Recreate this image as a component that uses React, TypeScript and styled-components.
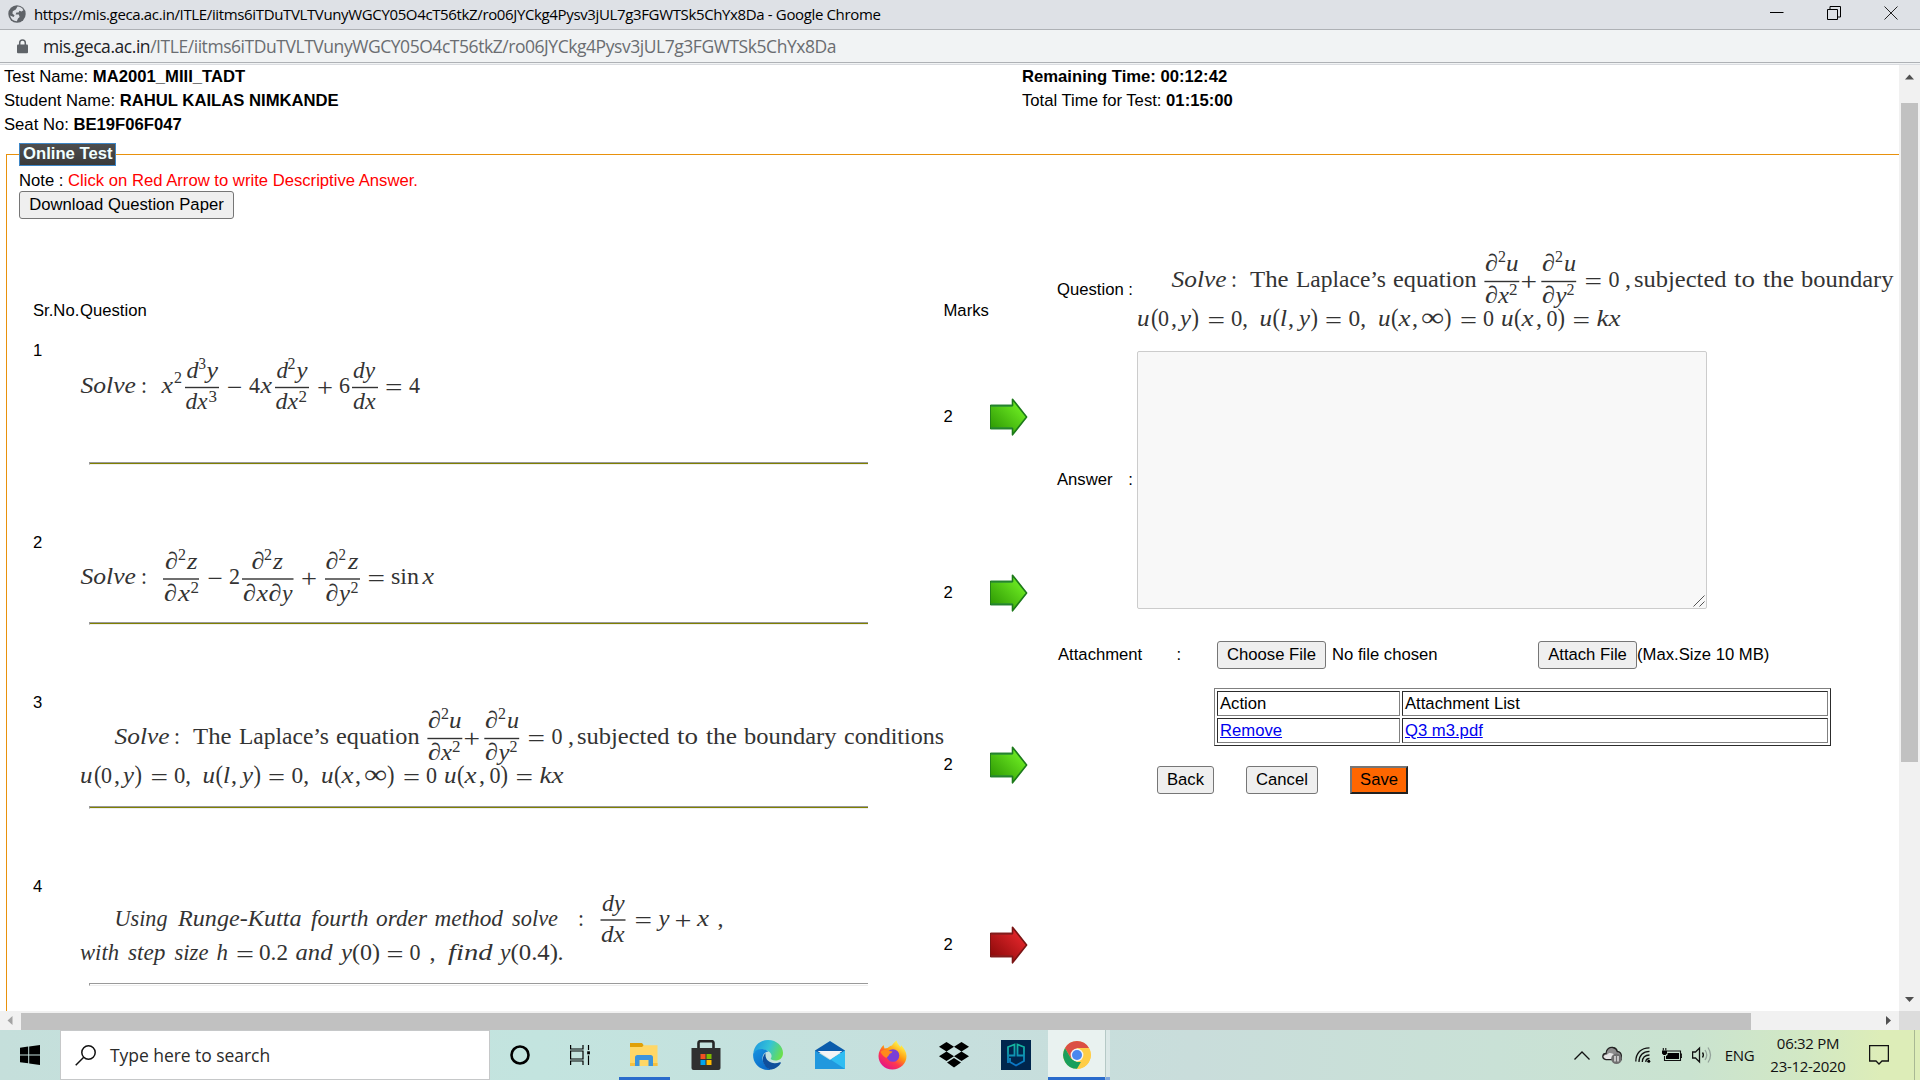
import React from 'react';
import styled, { createGlobalStyle } from 'styled-components';

const GlobalStyle = createGlobalStyle`
  * { box-sizing: border-box; }
  body { margin: 0; overflow: hidden; background: #fff; }
`;

const SANS = `"Liberation Sans", Arial, sans-serif`;
const UI = `"Open Sans", "Noto Sans", sans-serif`;

const Screen = styled.div`
  width: 1920px;
  height: 1080px;
  display: flex;
  flex-direction: column;
  overflow: hidden;
  background: #fff;
`;

/* ---------- browser chrome ---------- */

const TitleBar = styled.header`
  height: 30px;
  flex: none;
  display: flex;
  align-items: center;
  padding: 0 22px 2px 8px;
  background: #dee1e6;
  border-bottom: 1px solid #aeb1b5;
  font-family: ${UI};
`;

const TitleText = styled.span`
  margin-left: 8px;
  flex: 1;
  font-size: 15px;
  letter-spacing: -0.36px;
  color: #000;
  white-space: nowrap;
`;

const WindowButtons = styled.div`
  display: flex;
  align-items: center;
  gap: 43px;
  padding-bottom: 1px;
`;

const AddressBar = styled.div`
  height: 35px;
  flex: none;
  display: flex;
  align-items: center;
  padding: 0 16px 3px;
  background: linear-gradient(#f1f3f4 32px, #aeb1b5 32px, #aeb1b5 33px, #f1f3f4 33px, #f1f3f4 34px, #dadce0 34px);
  font-family: ${UI};
`;

const Url = styled.span`
  margin-left: 14px;
  font-size: 17.5px;
  letter-spacing: -0.45px;
  color: #6a6d71;
  white-space: nowrap;
  b { font-weight: 400; color: #202124; }
`;

const Viewport = styled.div`
  height: 946px;
  flex: none;
  display: flex;
`;

const Page = styled.main`
  width: 1899px;
  overflow: hidden;
  font-family: ${SANS};
  font-size: 16.67px;
  line-height: 24px;
  color: #000;
  white-space: nowrap;
`;

const VTrack = styled.div`
  width: 21px;
  display: flex;
  flex-direction: column;
  align-items: center;
  padding: 8px 0 7px;
  background: #f1f1f1;
`;

const VThumb = styled.div`
  width: 17px;
  height: 659px;
  flex: none;
  margin: 21px 0 auto;
  background: #c1c1c1;
`;

const HTrack = styled.div`
  height: 19px;
  flex: none;
  display: flex;
  align-items: center;
  background: #f1f1f1;
`;

const HThumb = styled.div`
  width: 1730px;
  height: 17px;
  margin: 2px auto 0 8px;
  background: #c1c1c1;
`;

const Corner = styled.div`
  width: 21px;
  height: 19px;
  margin-left: 6px;
  background: #dcdcdc;
`;

/* ---------- exam page ---------- */

const Info = styled.div`
  display: grid;
  grid-template-columns: 1018px 1fr;
  grid-auto-rows: 24px;
  margin: 0 0 0 4px;
`;

const Fieldset = styled.section`
  width: 2000px;
  height: 900px;
  margin: 17px 0 0 6px;
  padding-left: 12px;
  border: 1px solid #e8910c;
`;

const Legend = styled.div`
  width: 97px;
  height: 23px;
  margin-top: -12px;
  padding-left: 3px;
  border: 1px solid #3d86c6;
  background: linear-gradient(#4e4e4e, #3a3a3a);
  color: #f0ffff;
  font-weight: 700;
  line-height: 20px;
`;

const Note = styled.div`
  height: 22px;
  margin-top: 3px;
  span { color: #f00; }
`;

const Button = styled.button<{ $w: number }>`
  width: ${(p) => p.$w}px;
  height: 28px;
  flex: none;
  padding: 0 0 1px;
  border: 1px solid #767676;
  border-radius: 3px;
  background: #efefef;
  font: 16.67px ${SANS};
  color: #000;
`;

const SaveButton = styled(Button)`
  border: 2px solid;
  border-color: #767676 #212121 #212121 #767676;
  border-radius: 0;
  background: #ff6600;
`;

const Body = styled.div`
  display: flex;
`;

const Download = styled.div`
  width: 0;
`;

const Questions = styled.div`
  width: 1038px;
  padding: 108px 0 0 14px;
`;

const QuestionRow = styled.div<{ $h: number; $gap: number }>`
  display: grid;
  grid-template-columns: 47px 863.5px 46.5px 38px;
  height: ${(p) => p.$h}px;
  margin-bottom: ${(p) => p.$gap}px;
`;

const Middle = styled.div`
  align-self: center;
  display: flex;
`;

const Rule = styled.div<{ $c: string }>`
  width: 779px;
  height: 3px;
  margin-left: 9px;
  border-top: 1px solid #9a9a9a;
  border-left: 1px solid #9a9a9a;
  border-bottom: 1px solid #eee;
  background: ${(p) => p.$c};
`;

const Formula = styled.svg`
  display: block;
  overflow: visible;
  font-family: "Liberation Serif", "Times New Roman", serif;
  fill: #333;
`;

const AnswerForm = styled.form`
  padding-top: 38px;
`;

const Field = styled.div<{ $h: number }>`
  display: flex;
  align-items: center;
  height: ${(p) => p.$h}px;
`;

const Label = styled.label`
  width: 76px;
  margin-right: 4px;
  display: flex;
  justify-content: space-between;
`;

const AnswerBox = styled.div`
  position: relative;
  display: flex;
`;

const Answer = styled.textarea`
  width: 570px;
  height: 258px;
  border: 1px solid #ccc;
  border-radius: 2px;
  background: #f8f8f8;
  resize: none;
`;

const Grip = styled.svg`
  position: absolute;
  right: 2px;
  bottom: 2px;
`;

const Attach = styled.div`
  display: flex;
  align-items: center;
  height: 28px;
  margin: 32px 0 19px 1px;
`;

const AttachText = styled.span<{ $w?: number; $ml?: number }>`
  width: ${(p) => (p.$w ? p.$w + 'px' : 'auto')};
  margin-left: ${(p) => p.$ml || 0}px;
`;

const Attachments = styled.div`
  display: grid;
  grid-template-columns: 183px 426px;
  grid-auto-rows: 25px;
  gap: 2px;
  width: 617px;
  margin-left: 157px;
  padding: 2px;
  border: 1px solid;
  border-color: #808080 #2c2c2c #2c2c2c #808080;
`;

const Cell = styled.div`
  padding-left: 2px;
  border: 1px solid;
  border-color: #2c2c2c #808080 #808080 #2c2c2c;
  line-height: 23px;
`;

const Link = styled.a`
  color: #0000ee;
  text-decoration: underline;
`;

const Actions = styled.div`
  display: flex;
  gap: 32px;
  margin: 20px 0 0 100px;
`;

/* ---------- taskbar ---------- */

const Taskbar = styled.footer`
  height: 50px;
  flex: none;
  display: flex;
  background: linear-gradient(90deg, #c5dfdb 0, #c3e4df 28%, #c6dfdd 50%, #c9dddb 62%, #c9e1d6 78%, #cae3d0 88%, #d2e8c4 94%, #ddedb8 98%);
  font-family: ${UI};
`;

const Start = styled.div`
  width: 60px;
  padding: 15px 0 0 20px;
`;

const Search = styled.div`
  width: 430px;
  height: 50px;
  display: flex;
  align-items: center;
  padding-left: 14px;
  border: 1px solid #c6c8c9;
  background: #fff;
  font-size: 17.5px;
  letter-spacing: -0.05px;
  color: #2b2b2b;
  svg { margin-right: 14px; }
`;

const Apps = styled.div`
  display: flex;
  margin-left: -1px;
`;

const AppSlot = styled.div<{ $active?: boolean; $open?: boolean }>`
  width: ${(p) => (p.$active ? 57 : p.$open ? 51 : 62)}px;
  margin: 0 ${(p) => (p.$open ? 5.5 : 0)}px;
  margin-left: ${(p) => (p.$active ? 1 : p.$open ? 5.5 : 0)}px;
  display: flex;
  align-items: center;
  justify-content: center;
  padding-top: ${(p) => (p.$active || p.$open ? 3 : 0)}px;
  border-bottom: ${(p) => (p.$active || p.$open ? '3px solid #2a6bcc' : '0')};
  background: ${(p) => (p.$active ? '#e9f2f0' : 'transparent')};
`;

const Stacked = styled.div`
  width: 5px;
  border-left: 1px solid #b5c9c6;
  border-bottom: 3px solid #7ea6de;
  background: #dbe8e7;
`;

const Tray = styled.div`
  display: flex;
  align-items: center;
  margin-left: auto;
  font-size: 15px;
  letter-spacing: -0.3px;
  color: #111;
`;

const TrayItem = styled.div<{ $w: number; $ml: number }>`
  width: ${(p) => p.$w}px;
  margin-left: ${(p) => p.$ml}px;
  display: flex;
  justify-content: center;
  white-space: nowrap;
`;

const Clock = styled(TrayItem)`
  flex-direction: column;
  align-items: center;
  line-height: 23px;
  padding-bottom: 1px;
`;

const ShowDesktop = styled.div`
  width: 6px;
  height: 50px;
  margin-left: 25px;
  border-left: 1px solid #a9b894;
`;

/* ---------- formulas ---------- */

type Token = [text: string, x: number, x2: number, y: number, size?: number, roman?: boolean];

const S = 16.5;
const op = (t: string, x: number, x2: number, y: number): Token => [t, x - 1, x2 + 1, y, 26, true];

const Tokens = ({ list }: { list: Token[] }) => (
  <>
    {list.map(([t, x, x2, y, size = 24, roman], i) => (
      <text
        key={i}
        x={x}
        y={y}
        fontSize={size}
        fontStyle={roman ? 'normal' : 'italic'}
        textLength={x2 - x}
        lengthAdjust="spacingAndGlyphs"
      >
        {t}
      </text>
    ))}
  </>
);

const Bars = ({ y, list }: { y: number; list: [number, number][] }) => (
  <>
    {list.map(([a, b], i) => (
      <rect key={i} x={a} y={y - 0.7} width={b - a} height={1.4} />
    ))}
  </>
);

const f1: Token[] = [
  ['Solve', 80.5, 136, 392], [':', 141, 147, 392, 24, true], ['x', 161.5, 173, 392], ['2', 174, 182, 382, S, true],
  ['d', 186.5, 198.5, 377], ['3', 198.5, 206, 368, S, true], ['y', 206.5, 218, 377],
  ['dx', 185.5, 207.5, 408], ['3', 208.5, 217, 400.5, S, true],
  op('−', 228, 241.5, 395), ['4', 249, 260, 392, 24, true], ['x', 260.5, 272, 392],
  ['d', 276.5, 288, 377], ['2', 287.5, 295.5, 368, S, true], ['y', 296.5, 307.5, 377],
  ['dx', 275.5, 298, 408], ['2', 298.5, 307, 400.5, S, true],
  op('+', 318, 332, 395), ['6', 339, 350, 392, 24, true],
  ['dy', 353, 375, 377], ['dx', 353, 375.5, 408],
  op('=', 386, 401.5, 395), ['4', 409, 420, 392, 24, true],
];

const f2: Token[] = [
  ['Solve', 80.5, 136, 584], [':', 141, 147, 584, 24, true],
  ['∂', 165, 178, 568.7], ['2', 178, 186, 559.5, S, true], ['z', 187, 197.5, 568.7],
  ['∂', 164, 177, 600.7], ['x', 178, 190, 600.7], ['2', 190.5, 199, 593, S, true],
  op('−', 208.5, 222, 587), ['2', 229, 240, 584, 24, true],
  ['∂', 251.5, 264.5, 568.7], ['2', 264, 272, 559.5, S, true], ['z', 273, 283, 568.7],
  ['∂', 243, 256, 600.7], ['x', 256.5, 268, 600.7], ['∂', 268.5, 281.5, 600.7], ['y', 282, 292.5, 600.7],
  op('+', 302, 316, 587),
  ['∂', 325.5, 338.5, 568.7], ['2', 338.5, 346, 559.5, S, true], ['z', 348, 358.5, 568.7],
  ['∂', 325.5, 338.5, 600.7], ['y', 339, 350, 600.7], ['2', 350.5, 358.5, 593, S, true],
  op('=', 368.5, 384, 587), ['sin', 391, 419, 584, 24, true], ['x', 422.5, 434, 584],
];

const laplace: Token[] = [
  ['Solve', 114.5, 169.5, 744], [':', 174, 180, 744, 24, true],
  ['The', 193, 231.5, 744, 24, true], ['Laplace’s', 239, 329, 744, 24, true], ['equation', 336, 419.5, 744, 24, true],
  ['∂', 428, 441, 728.3], ['2', 441, 449, 719, S, true], ['u', 449, 461.5, 728.3],
  ['∂', 428, 441, 760], ['x', 441, 452, 760], ['2', 452, 460.5, 752, S, true],
  op('+', 464.5, 479, 747),
  ['∂', 485, 498, 728.3], ['2', 498, 506, 719, S, true], ['u', 507, 519, 728.3],
  ['∂', 485, 498, 760], ['y', 498.5, 509.5, 760], ['2', 509.5, 517.5, 752, S, true],
  op('=', 528.5, 544, 747), ['0', 551.5, 562.5, 744, 24, true], [',', 568, 574, 744, 24, true],
  ['subjected', 577, 669.5, 744, 24, true], ['to', 677, 698, 744, 24, true], ['the', 706, 737, 744, 24, true],
  ['boundary', 744, 836.5, 744, 24, true],
  ['u', 80, 92.5, 783], ['(', 94, 101.5, 783, 25, true], ['0', 101, 112, 783, 24, true], [',', 114, 120, 783, 24, true],
  ['y', 123, 134, 783], [')', 134.5, 142, 783, 25, true], op('=', 151.5, 167, 786), ['0,', 174, 191, 783, 24, true],
  ['u', 202.5, 215, 783], ['(', 215.5, 223, 783, 25, true], ['l', 223, 230, 783], [',', 231, 237, 783, 24, true],
  ['y', 242, 253, 783], [')', 253.5, 261, 783, 25, true], op('=', 269, 284, 786), ['0,', 291.5, 309, 783, 24, true],
  ['u', 321, 333.5, 783], ['(', 334, 341.5, 783, 25, true], ['x', 341.5, 353.5, 783], [',', 355, 361, 783, 24, true],
  ['∞', 364, 387, 783, 26, true], [')', 387, 394.5, 783, 25, true], op('=', 404, 419, 786), ['0', 426, 437, 783, 24, true],
  ['u', 444, 456.5, 783], ['(', 457, 464.5, 783, 25, true], ['x', 464.5, 476.5, 783], [',', 479, 485, 783, 24, true],
  ['0', 489.5, 500.5, 783, 24, true], [')', 500.5, 508, 783, 25, true], op('=', 516.5, 532, 786), ['kx', 539.5, 563.5, 783],
];

const f3: Token[] = [...laplace, ['conditions', 844, 944, 744, 24, true]];

const f4: Token[] = [
  ['Using', 114.5, 167.5, 924], ['Runge-Kutta', 178, 301.5, 924], ['fourth', 311, 368.5, 924],
  ['order', 376, 427, 924], ['method', 434.5, 503, 924], ['solve', 512, 558, 924], [':', 578, 584, 924, 24, true],
  ['dy', 602, 624.5, 909], ['dx', 601, 624.5, 940], op('=', 635.5, 651, 927), ['y', 658.5, 669.5, 924],
  op('+', 675.5, 690.5, 927), ['x', 697, 709, 924], [',', 717.5, 723.5, 924, 24, true],
  ['with', 80, 119, 958.5], ['step', 128, 165.5, 958.5], ['size', 174.5, 208.5, 958.5], ['h', 216.5, 228, 958.5],
  op('=', 237, 253, 961), ['0.2', 259, 288, 958.5, 24, true], ['and', 295.5, 332.5, 958.5], ['y', 341, 352, 958.5],
  ['(0)', 352, 380, 958.5, 24, true], op('=', 387.5, 402.5, 961), ['0', 409.5, 420.5, 958.5, 24, true],
  [',', 429.5, 435.5, 958.5, 24, true], ['find', 448, 492.5, 958.5], ['y', 500, 510.5, 958.5],
  ['(0.4)', 510.5, 558, 958.5, 24, true], ['.', 557.5, 563.5, 958.5, 24, true],
];

const laplaceBars: [number, number][] = [[427.4, 462.3], [484.3, 519.2]];

type Question = {
  n: number; h: number; gap: number; top: number; fh: number; list: Token[];
  barY: number; bars: [number, number][]; rule: string; color: 'green' | 'red';
};

const questions: Question[] = [
  { n: 1, h: 156, gap: 36, top: 338, fh: 123, list: f1, barY: 386.5, bars: [[185, 219], [275, 309], [352, 378]], rule: '#808000', color: 'green' },
  { n: 2, h: 124, gap: 36, top: 531, fh: 91, list: f2, barY: 579, bars: [[163, 199], [242, 293.5], [325, 360]], rule: '#808000', color: 'green' },
  { n: 3, h: 148, gap: 36, top: 691, fh: 115, list: f3, barY: 738.5, bars: laplaceBars, rule: '#808000', color: 'green' },
  { n: 4, h: 140, gap: 0, top: 873.5, fh: 108, list: f4, barY: 918.5, bars: [[600.5, 625.5]], rule: '#fff', color: 'red' },
];

/* ---------- icons ---------- */

const Arrow = ({ color }: { color: 'green' | 'red' }) => {
  const id = 'arrow-' + color;
  const [dark, light, edge, shade] =
    color === 'green' ? ['#2f9a04', '#6be821', '#1d7a1a', '#2a8a3c'] : ['#8c0a0a', '#e0252a', '#7a1414', '#8a2020'];
  return (
    <svg width="38" height="38" viewBox="0 0 38 38">
      <defs>
        <linearGradient id={id} x1="0" y1="1" x2="1" y2="0">
          <stop offset="0.1" stopColor={dark} />
          <stop offset="0.8" stopColor={light} />
        </linearGradient>
      </defs>
      <path d="M0 7.5H22.5V1.2L36.6 19L22.5 36.8V30.5H0Z" fill={`url(#${id})`} stroke={edge} strokeWidth="1.6" strokeLinejoin="round" />
      <path d="M1 7.7H22.5M1 30.3H22.5" stroke={shade} strokeWidth="2.4" opacity="0.6" />
    </svg>
  );
};

const CaretSvg = styled.svg`
  flex: none;
`;

const Caret = ({ dir, color = '#505050' }: { dir: 'up' | 'down' | 'right'; color?: string }) => {
  const d = { up: 'M0 6.5L4.5 1.5L9 6.5Z', down: 'M0 2L4.5 7L9 2Z', right: 'M2 0V9L7 4.5Z' }[dir];
  return (
    <CaretSvg width="9" height="9" viewBox="0 0 9 9">
      <path d={d} fill={color} />
    </CaretSvg>
  );
};

const Globe = () => (
  <svg width="18" height="18" viewBox="0 0 18 18">
    <circle cx="9" cy="9" r="8.7" fill="#5f6368" />
    <path d="M9.5 1.6Q13.6 1.8 15.4 5.2L13.6 6.4L11.4 5.8L10.6 7.6L8.4 7.4L7.6 9.4L10.8 9.6L11.6 12L10 13.4L8.8 16.2Q3.6 15.8 2 10.4L5.6 12L6.6 10.6L4.4 8.4L4.8 6.2L7.8 4.6Z" fill="#dee1e6" />
  </svg>
);

const Lock = () => (
  <svg width="13" height="15" viewBox="0 0 13 15">
    <rect x="1" y="5.5" width="11" height="8.7" rx="1" fill="#5f6368" />
    <path d="M3.7 6V3.8a2.8 2.8 0 0 1 5.6 0V6" fill="none" stroke="#5f6368" strokeWidth="1.5" />
  </svg>
);

const FolderIcon = () => (
  <svg width="28" height="24" viewBox="0 0 28 24">
    <path d="M0 0H12L13.5 2V5H0Z" fill="#e0a008" />
    <path d="M0 4H12L14 2.3H27.5V23H0Z" fill="#ffd766" />
    <path d="M5 23V14.5a2.5 2.5 0 0 1 2.5-2.5H20.5a2.5 2.5 0 0 1 2.5 2.5V23H18.5V17H9.5V23Z" fill="#3c94dc" />
    <path d="M0 20H5V23H0ZM23 20H27.5V23H23Z" fill="#f7c03f" />
  </svg>
);

const StoreIcon = () => (
  <svg width="30" height="30" viewBox="0 0 30 30">
    <path d="M7.5 9V3a1.8 1.8 0 0 1 1.8-1.8H20.7A1.8 1.8 0 0 1 22.5 3V9" fill="none" stroke="#262626" strokeWidth="2.6" />
    <path d="M.5 8H29.5V28a2 2 0 0 1-2 2H2.5a2 2 0 0 1-2-2Z" fill="#303030" />
    <path d="M9.5 14H14.5V19H9.5Z" fill="#f25022" />
    <path d="M15.5 14H20.5V19H15.5Z" fill="#7fba00" />
    <path d="M9.5 20H14.5V25H9.5Z" fill="#00a4ef" />
    <path d="M15.5 20H20.5V25H15.5Z" fill="#ffb900" />
  </svg>
);

const EdgeIcon = () => (
  <svg width="30" height="30" viewBox="0 0 30 30">
    <defs>
      <linearGradient id="edgeTop" x1="0" y1="0.3" x2="1" y2="0.6">
        <stop offset="0" stopColor="#1f9be0" />
        <stop offset="0.5" stopColor="#35c3d6" />
        <stop offset="1" stopColor="#6be04a" />
      </linearGradient>
      <linearGradient id="edgeLeft" x1="0" y1="0" x2="0.6" y2="1">
        <stop offset="0" stopColor="#1793e0" />
        <stop offset="1" stopColor="#0a6ac8" />
      </linearGradient>
    </defs>
    <path d="M.3 13C1.5 5 7.5 0 15 0C24 0 30 6.5 30 13C30 18 26.5 20.5 22.5 20.5C19 20.5 17.5 19.3 17.8 18.3C18.5 17.3 18.8 16.3 18.3 14.6C16.5 9.5 7 7 .3 13Z" fill="url(#edgeTop)" />
    <path d="M.2 13.5C3.5 8 11 8 15.5 11.5C10.5 12 8.5 17 10 21C11.5 25.5 15.5 29 18 29.7C8 31.5-1 24 .2 13.5Z" fill="url(#edgeLeft)" />
    <path d="M12.5 13C9.5 16 9 20.5 11 24C13 28 16.5 29.7 18.5 29.5C22.5 28.8 25.8 26.5 27.8 23.2C28 22.5 27.5 22 26.8 22.3C19 25 12.5 21 12.5 15Z" fill="#0f4f9c" />
  </svg>
);

const MailIcon = () => (
  <svg width="30" height="28" viewBox="0 0 30 28">
    <path d="M0 9.5L15 0L30 9.5V12H0Z" fill="#0b5cab" />
    <path d="M0 9.5V28H30V9.5L15 19Z" fill="#2198de" />
    <path d="M30 9.5V28L15.5 18.5Z" fill="#30bdf2" />
    <path d="M2.5 10H27.5L15.5 18.3Z" fill="#f4f4f6" />
  </svg>
);

const FirefoxIcon = () => (
  <svg width="29" height="30" viewBox="0 0 29 30">
    <defs>
      <linearGradient id="fox" x1="0.85" y1="0.05" x2="0.25" y2="0.95">
        <stop offset="0.1" stopColor="#fff04a" />
        <stop offset="0.45" stopColor="#ff980e" />
        <stop offset="0.7" stopColor="#ff3750" />
        <stop offset="1" stopColor="#e31587" />
      </linearGradient>
    </defs>
    <path d="M5.5 5L6.5 8.5L9.5 8C11 7 12 5.5 14 5.5C15 3.5 17 1.5 18.5 .5C19 3 20.5 4.5 22.5 7C23 6.5 23 5.5 23 5C26 8 28.5 12 28.5 16C28.5 24 22 29.5 14.5 29.5C6.5 29.5 .5 23.5 .5 16C.5 12 2.5 8 5.5 5Z" fill="url(#fox)" />
    <circle cx="15" cy="15.5" r="6.3" fill="#7a3fd8" />
    <path d="M2.5 12C5 9 9 10 11 11L14.5 11.5C14 13 12 13.5 11.5 14C11 16 8.5 17 8.5 18C6 17 4 15 2.5 12Z" fill="#ff8a1c" />
  </svg>
);

const DropboxIcon = () => (
  <svg width="30" height="26" viewBox="0 0 30 26">
    <path d="M7.500 0L15 4.700L7.500 9.400L0 4.700ZM22.500 0L30 4.700L22.500 9.400L15 4.700ZM7.500 9.600L15 14.300L7.500 19L0 14.300ZM22.500 9.600L30 14.300L22.500 19L15 14.300ZM15 16L22 20.600L15 25.400L8 20.600Z" fill="#000" />
  </svg>
);

const PgIcon = () => (
  <svg width="30" height="30" viewBox="0 0 30 30">
    <defs>
      <linearGradient id="pg" x1="0" y1="0" x2="0" y2="1">
        <stop offset="0" stopColor="#14b8a0" />
        <stop offset="1" stopColor="#0a72c8" />
      </linearGradient>
    </defs>
    <rect width="30" height="30" fill="#00264d" />
    <path d="M7 23V7L13.5 4.5V15.5H8M23 15.5H16.5V4.5L23 7V21L15 25.5L9 22V18" fill="none" stroke="url(#pg)" strokeWidth="1.8" />
  </svg>
);

const ChromeIcon = () => (
  <svg width="28" height="28" viewBox="0 0 28 28">
    <circle cx="14" cy="14" r="13.8" fill="#ffcd46" />
    <path d="M2 7.1A13.8 13.8 0 0 1 26 7.1H14L8 17.5Z" fill="#db4f43" />
    <path d="M2 7.1L8 17.45L14 20.9H20L14 27.8A13.8 13.8 0 0 1 2 7.1Z" fill="#1a9f5c" />
    <path d="M14 7.1H26A13.8 13.8 0 0 1 14 27.8L20 17.5Z" fill="#ffcd46" />
    <circle cx="14" cy="14" r="6.4" fill="#f4f4f4" />
    <circle cx="14" cy="14" r="5" fill="#4a88ee" />
  </svg>
);

const line = { fill: 'none', stroke: '#111', strokeWidth: 1.3 } as const;

export default function App() {
  return (
    <>
      <GlobalStyle />
      <Screen>
        <TitleBar>
          <Globe />
          <TitleText>https://mis.geca.ac.in/ITLE/iitms6iTDuTVLTVunyWGCY05O4cT56tkZ/ro06JYCkg4Pysv3jUL7g3FGWTSk5ChYx8Da - Google Chrome</TitleText>
          <WindowButtons>
            <svg width="14" height="14" viewBox="0 0 14 14"><path d="M0 6.5H13.5" stroke="#000" /></svg>
            <svg width="14" height="14" viewBox="0 0 14 14"><path d="M.5 3.5H10.5V13.5H.5ZM3 3.5V.5H13.5V11H10.5" fill="none" stroke="#000" /></svg>
            <svg width="14" height="14" viewBox="0 0 14 14"><path d="M.5.5L13.5 13.5M13.5.5L.5 13.5" stroke="#222" /></svg>
          </WindowButtons>
        </TitleBar>
        <AddressBar>
          <Lock />
          <Url><b>mis.geca.ac.in</b>/ITLE/iitms6iTDuTVLTVunyWGCY05O4cT56tkZ/ro06JYCkg4Pysv3jUL7g3FGWTSk5ChYx8Da</Url>
        </AddressBar>

        <Viewport>
          <Page>
            <Info>
              <div>Test Name: <b>MA2001_MIII_TADT</b></div>
              <b>Remaining Time: 00:12:42</b>
              <div>Student Name: <b>RAHUL KAILAS NIMKANDE</b></div>
              <div>Total Time for Test: <b>01:15:00</b></div>
              <div>Seat No: <b>BE19F06F047</b></div>
            </Info>
            <Fieldset>
              <Legend>Online Test</Legend>
              <Note>Note : <span>Click on Red Arrow to write Descriptive Answer.</span></Note>
              <Body>
                <Download><Button $w={215}>Download Question Paper</Button></Download>
                <Questions>
                  <QuestionRow $h={24} $gap={16}>
                    <span>Sr.No.</span>
                    <span>Question</span>
                    <span>Marks</span>
                  </QuestionRow>
                  {questions.map((q) => (
                    <QuestionRow key={q.n} $h={q.h} $gap={q.gap}>
                      <span>{q.n}</span>
                      <div>
                        <Formula width="863" height={q.fh} viewBox={`80 ${q.top} 863 ${q.fh}`}>
                          <Tokens list={q.list} />
                          <Bars y={q.barY} list={q.bars} />
                        </Formula>
                        <Rule $c={q.rule} />
                      </div>
                      <Middle>2</Middle>
                      <Middle><Arrow color={q.color} /></Middle>
                    </QuestionRow>
                  ))}
                </Questions>
                <AnswerForm>
                  <Field $h={122}>
                    <Label><span>Question</span><span>:</span></Label>
                    <Formula width="762" height="122" viewBox="80 686 762 122">
                      <Tokens list={laplace} />
                      <Bars y={738.5} list={laplaceBars} />
                    </Formula>
                  </Field>
                  <Field $h={258}>
                    <Label><span>Answer</span><span>:</span></Label>
                    <AnswerBox>
                      <Answer />
                      <Grip width="12" height="12" viewBox="0 0 12 12">
                        <path d="M.5 11.500L11.500 .5M6.500 11.500L11.500 6.500" stroke="#555" />
                      </Grip>
                    </AnswerBox>
                  </Field>
                  <Attach>
                    <AttachText $w={118.5}>Attachment</AttachText>
                    <AttachText $w={40.5}>:</AttachText>
                    <Button type="button" $w={109}>Choose File</Button>
                    <AttachText $w={206} $ml={6}>No file chosen</AttachText>
                    <Button type="button" $w={99}>Attach File</Button>
                    <AttachText>(Max.Size 10 MB)</AttachText>
                  </Attach>
                  <Attachments>
                    <Cell>Action</Cell>
                    <Cell>Attachment List</Cell>
                    <Cell><Link>Remove</Link></Cell>
                    <Cell><Link>Q3 m3.pdf</Link></Cell>
                  </Attachments>
                  <Actions>
                    <Button type="button" $w={57}>Back</Button>
                    <Button type="button" $w={72}>Cancel</Button>
                    <SaveButton type="button" $w={58}>Save</SaveButton>
                  </Actions>
                </AnswerForm>
              </Body>
            </Fieldset>
          </Page>
          <VTrack>
            <Caret dir="up" />
            <VThumb />
            <Caret dir="down" />
          </VTrack>
        </Viewport>
        <HTrack>
          <svg width="13" height="9" viewBox="0 0 13 9"><path d="M12.500 0V9L7.500 4.500Z" fill="#a3a3a3" /></svg>
          <HThumb />
          <Caret dir="right" />
          <Corner />
        </HTrack>

        <Taskbar>
          <Start>
            <svg width="20" height="20" viewBox="0 0 20 20"><path d="M0 2.800L8.200 1.600V9.400H0ZM9.200 1.400L20 0V9.400H9.200ZM0 10.400H8.200V18.300L0 17.200ZM9.200 10.400H20V20L9.200 18.500Z" /></svg>
          </Start>
          <Search>
            <svg width="21" height="21" viewBox="0 0 21 21"><circle cx="13.500" cy="7.500" r="6.700" {...line} strokeWidth="1.500" /><path d="M8.700 12.300L.7 20.300" {...line} strokeWidth="1.500" /></svg>
            Type here to search
          </Search>
          <Apps>
            <AppSlot><svg width="20" height="20" viewBox="0 0 20 20"><circle cx="10" cy="10" r="8.500" fill="none" stroke="#000" strokeWidth="2.600" /></svg></AppSlot>
            <AppSlot>
              <svg width="24" height="20" viewBox="0 0 24 20"><path d="M.6 0V4H13V0M.6 20V16H13V20M.6 6H13V14H.6ZM18.500 0V5M18.500 10.500V20" fill="none" stroke="#000" strokeWidth="1.200" /><rect x="17.200" y="6.300" width="2.700" height="3" /></svg>
            </AppSlot>
            <AppSlot $open><FolderIcon /></AppSlot>
            <AppSlot><StoreIcon /></AppSlot>
            <AppSlot><EdgeIcon /></AppSlot>
            <AppSlot><MailIcon /></AppSlot>
            <AppSlot><FirefoxIcon /></AppSlot>
            <AppSlot><DropboxIcon /></AppSlot>
            <AppSlot><PgIcon /></AppSlot>
            <AppSlot $active><ChromeIcon /></AppSlot>
            <Stacked />
          </Apps>
          <Tray>
            <TrayItem $w={16} $ml={0}><svg width="16" height="9" viewBox="0 0 16 9"><path d="M.5 8.500L8 1L15.500 8.500" {...line} /></svg></TrayItem>
            <TrayItem $w={20} $ml={12}>
              <svg width="20" height="18" viewBox="0 0 20 18">
                <path d="M4 13.500C-.5 13 0 7.500 4 7.500C4 3 8 .8 11 1.500C13.500 2 15 4 15.300 5.500C18 5.500 19.500 8 19.300 10V13.500Z" fill="#8d8d8d" stroke="#222" strokeWidth="1.300" />
                <path d="M1.500 11C2 9 4 8.500 5 8.700C7 6 10 7 13 9L10 13H4Z" fill="#e4e4e4" />
                <circle cx="14.500" cy="12.700" r="5.300" fill="#6f6f6f" />
                <path d="M13 10V15.500M16 10V15.500" stroke="#fff" strokeWidth="1.200" />
              </svg>
            </TrayItem>
            <TrayItem $w={16} $ml={13}>
              <svg width="16" height="16" viewBox="0 0 16 16"><path d="M.8 14.500C.8 6 6 .8 14.500.8M4 15C4 8.500 8 4.300 14.500 4.300M7.300 15C7.500 11 10 8 14.500 8M10.800 15C10.800 13 12.300 11.500 14.500 11.500" {...line} /><circle cx="13.800" cy="14.200" r="1.500" /></svg>
            </TrayItem>
            <TrayItem $w={20} $ml={11}>
              <svg width="20" height="14" viewBox="0 0 20 14"><path d="M5 3H18.500V12.500H2.500V8M18.500 6H19.700V9.500H18.500M1.300 0V2.500M3.800 0V2.500" {...line} strokeWidth="1.100" /><path d="M0 2.500H5V5.500L3.500 7H1.500L0 5.500ZM5.500 5H17V11H4V8L5.500 7Z" /></svg>
            </TrayItem>
            <TrayItem $w={20} $ml={10}>
              <svg width="20" height="18" viewBox="0 0 20 18"><path d="M.6 6H3.500L7.500 2V16L3.500 12H.6Z" {...line} /><path d="M10.500 6.500Q12.300 9 10.500 11.500" {...line} /><path d="M13 4Q16.500 9 13 14M16 1.500Q21 9 16 16.500" {...line} stroke="#93a29a" /></svg>
            </TrayItem>
            <TrayItem $w={27} $ml={14}>ENG</TrayItem>
            <Clock $w={76} $ml={17}>
              <span>06:32 PM</span>
              <span>23-12-2020</span>
            </Clock>
            <TrayItem $w={20} $ml={23}>
              <svg width="20" height="20" viewBox="0 0 20 20"><path d="M.6.6H19.400V16H13L10 19L7 16H.6Z" {...line} /></svg>
            </TrayItem>
            <ShowDesktop />
          </Tray>
        </Taskbar>
      </Screen>
    </>
  );
}
